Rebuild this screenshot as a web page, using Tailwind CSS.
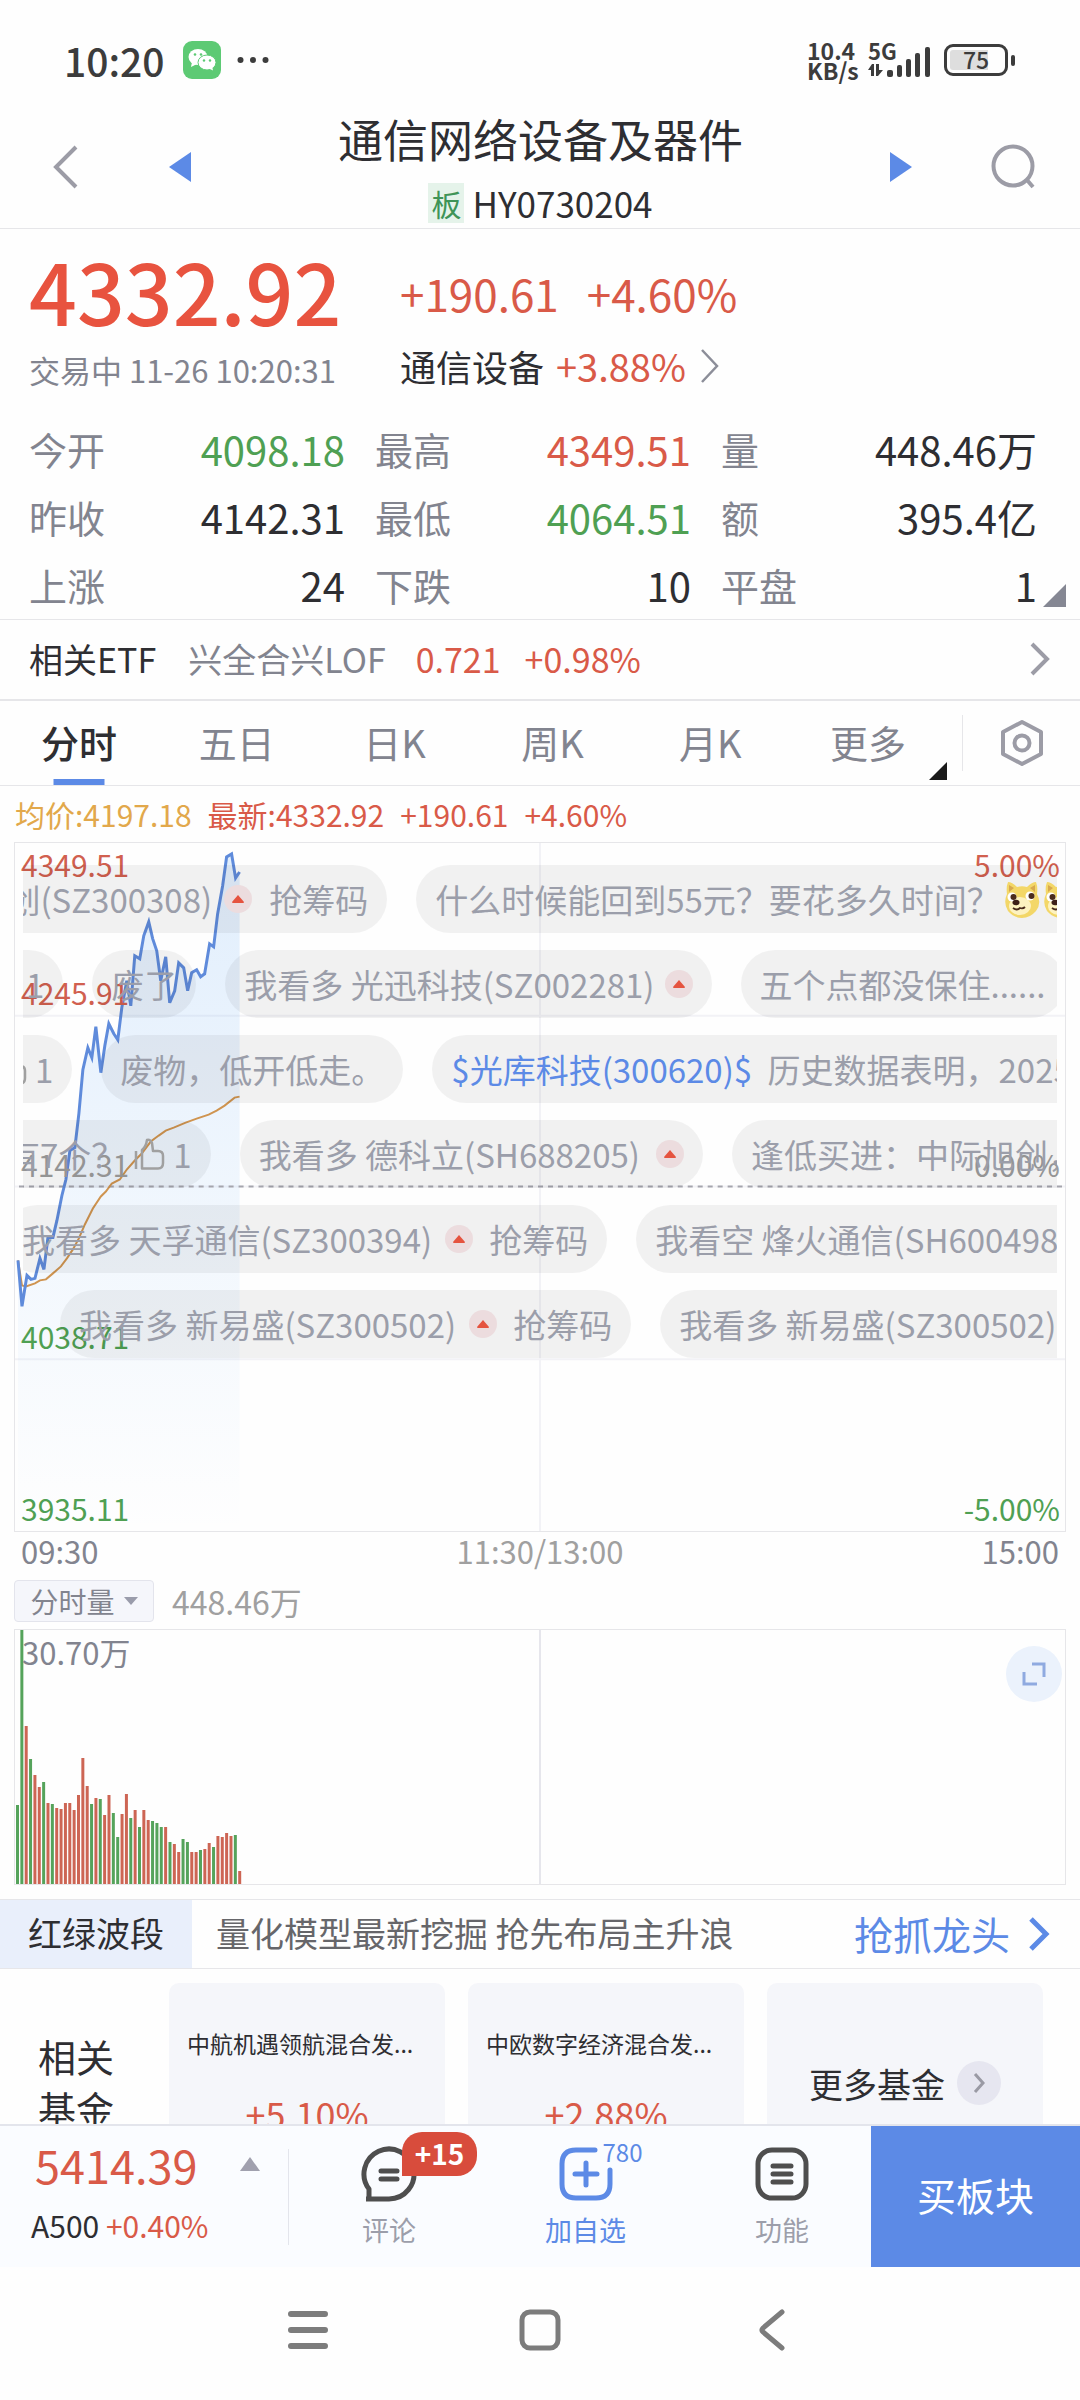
<!DOCTYPE html>
<html lang="zh-CN">
<head>
  <meta charset="UTF-8" />
  <meta name="viewport" content="width=device-width, initial-scale=1.0"/>
  <title>通信网络设备及器件 HY0730204</title>
  <script src="https://cdn.jsdelivr.net/npm/@tailwindcss/browser@4"></script>
</head>
<body class="h-screen flex flex-col overflow-hidden bg-[#fefefe] text-[#2e2e32] font-['Noto_Sans_CJK_SC',sans-serif] whitespace-nowrap">

  <!-- Shared icons -->
  <svg class="hidden">
    <symbol id="up" viewBox="0 0 28 28">
      <circle cx="14" cy="14" r="14" fill="#ecdcde"/>
      <path d="M14 10 L20 17 Q20 18 19 18 H9 Q8 18 8 17 Z" fill="#e5533f"/>
    </symbol>
    <symbol id="thumb" viewBox="0 0 31 32">
      <path d="M2 13 V31 M8 30.500 H24 Q29 30.500 29 25 V18 Q29 13 24 13 H19 L18 5 Q16 1 13 2 Q12 9 8 12 Z" fill="none" stroke="#a0a0a0" stroke-width="2.500" stroke-linejoin="round"/>
    </symbol>
    <symbol id="doge" viewBox="0 0 36 40">
      <path d="M4 3 Q8 3 13 8 Q18 6.500 23 8 Q28 3 32 3 Q34 8 33 15 Q38 24 32 32 Q26 39 18 39 Q10 39 4 32 Q-1 24 3 15 Q2 8 4 3Z" fill="#f3d768"/>
      <path d="M5 6 L10 9 L5 13Z M31 6 L26 9 L31 13Z" fill="#d8a94e"/>
      <ellipse cx="16" cy="27" rx="11" ry="9" fill="#fdf2c0"/>
      <circle cx="8" cy="18" r="4.500" fill="#fff"/><circle cx="26" cy="17" r="4.500" fill="#fff"/>
      <circle cx="9.500" cy="18" r="3" fill="#4a2b1c"/><circle cx="27.500" cy="17" r="3" fill="#4a2b1c"/>
      <ellipse cx="12" cy="23.500" rx="3.500" ry="2.800" fill="#3d2018"/>
      <path d="M9 29 Q13 32 16 29 Q19 30 21 28" fill="none" stroke="#4a2b1c" stroke-width="1.800"/>
    </symbol>
  </svg>

  <!-- Status bar -->
  <div class="h-[106px] pt-[14px] shrink-0 flex items-center pl-[64px] pr-[72px]">
    <span class="text-[39px] leading-[48px] font-medium text-[#3c3c3c]">10:20</span>
    <svg class="ml-[18px] size-[38px]" viewBox="0 0 38 38">
      <rect width="38" height="38" rx="9" fill="#5dca74"/>
      <ellipse cx="15" cy="16" rx="9.500" ry="8" fill="#fff"/>
      <path d="M9 21 L8 26 L14 23Z" fill="#fff"/>
      <ellipse cx="24" cy="21.500" rx="9" ry="7.500" fill="#fff" stroke="#5dca74" stroke-width="1"/>
      <path d="M25 27 L30 29.500 L29 25Z" fill="#fff"/>
      <g fill="#5dca74"><circle cx="12" cy="13.500" r="1.300"/><circle cx="18" cy="13.500" r="1.300"/><circle cx="21" cy="19.500" r="1.200"/><circle cx="27" cy="19.500" r="1.200"/></g>
    </svg>
    <svg class="ml-[16px] w-[32px] h-[8px]" viewBox="0 0 32 8" fill="#3c3c3c"><circle cx="3.500" cy="4" r="3"/><circle cx="16" cy="4" r="3"/><circle cx="28.500" cy="4" r="3"/></svg>
    <div class="ml-auto w-[53px] text-[23px] leading-[20px] font-bold text-[#3c3c3c]">
      <p>10.4</p>
      <p>KB/s</p>
    </div>
    <div class="ml-[8px] relative w-[66px] h-[40px]">
      <span class="absolute left-0 top-0 text-[22px] leading-[20px] font-bold text-[#3c3c3c]">5G</span>
      <svg class="absolute bottom-[3px] left-0 w-[66px] h-[30px]" viewBox="0 0 66 30" fill="#3c3c3c">
        <path d="M4 17 L0 23 H3 V29 H6 V17Z M8 17 V29 H10 L15 23 H11 V17Z"/>
        <rect x="19" y="23" width="6" height="7" rx="2"/><rect x="29" y="18" width="5" height="12" rx="2"/><rect x="38" y="12" width="5" height="18" rx="2"/><rect x="47" y="6" width="5" height="24" rx="2"/><rect x="57" y="0" width="5" height="30" rx="2"/>
      </svg>
    </div>
    <div class="ml-[10px] relative w-[64px] h-[32px] rounded-[9px] border-[3px] border-[#3c3c3c] p-[3px]">
      <div class="w-[38px] h-full bg-[#dedede] rounded-l-[3px]"></div>
      <span class="absolute inset-0 text-center text-[23px] leading-[24px] font-medium text-[#3c3c3c]">75</span>
      <div class="absolute -right-[10px] top-[8px] w-[4px] h-[11px] rounded-full bg-[#3c3c3c]"></div>
    </div>
  </div>

  <!-- Title -->
  <header class="h-[123px] shrink-0 border-b border-[#e6e6e9] flex items-center pl-[52px] pr-[44px]">
    <button aria-label="返回"><svg class="w-[28px] h-[44px]" viewBox="0 0 28 44"><path d="M24 2 L4 22 L24 42" fill="none" stroke="#9c9ca6" stroke-width="4"/></svg></button>
    <button aria-label="上一个" class="ml-[89px]"><svg class="w-[22px] h-[30px]" viewBox="0 0 22 30"><path d="M22 0 V30 L0 15Z" fill="#5c8ae6"/></svg></button>
    <div class="flex-1 flex flex-col items-center gap-[14px] pb-[2px]">
      <h1 class="text-[45px] leading-[60px]">通信网络设备及器件</h1>
      <div class="flex items-center gap-[8px] text-[35px] leading-[40px]">
        <span class="bg-[#e5f3ea] text-[#3f9457] text-[30px] px-[3px]">板</span>
        <span>HY0730204</span>
      </div>
    </div>
    <button aria-label="下一个" class="mr-[78px]"><svg class="w-[22px] h-[30px]" viewBox="0 0 22 30"><path d="M0 0 V30 L22 15Z" fill="#5c8ae6"/></svg></button>
    <button aria-label="搜索"><svg class="w-[46px] h-[46px]" viewBox="0 0 46 46" fill="none" stroke="#9c9ca6" stroke-width="4"><circle cx="23" cy="22" r="19.500"/><path d="M37 36 L43 43"/></svg></button>
  </header>

  <!-- Scrolling content -->
  <main class="flex-1 min-h-0 overflow-hidden">

    <section class="border-b border-[#e6e6e9] relative">
      <div class="flex pl-[29px] pr-[30px] pt-[13px] pb-[24px]">
        <div class="w-[371px]">
          <p class="text-[84px] leading-[96px] font-medium text-[#e8533f]">4332.92</p>
          <p class="mt-[12px] text-[31px] leading-[40px] text-[#82848f]">交易中 11-26 10:20:31</p>
        </div>
        <div class="pt-[23px]">
          <p class="flex gap-[28px] text-[44px] leading-[56px] text-[#d95a48]"><span>+190.61</span><span>+4.60%</span></p>
          <a href="#" class="mt-[20px] flex items-center text-[36px] leading-[50px]">通信设备<span class="ml-[12px] text-[38px] text-[#d95a48]">+3.88%</span>
            <svg class="ml-[14px] w-[20px] h-[36px]" viewBox="0 0 20 36"><path d="M2 2 L17 18 L2 34" fill="none" stroke="#8c8e99" stroke-width="2.500"/></svg>
          </a>
        </div>
      </div>
      <dl class="grid grid-cols-3 gap-x-[30px] pl-[29px] pr-[43px] text-[38px] leading-[68px]">
        <div class="flex justify-between"><dt class="text-[#82848f]">今开</dt><dd class="text-[40px] text-[#4fa053]">4098.18</dd></div>
        <div class="flex justify-between"><dt class="text-[#82848f]">最高</dt><dd class="text-[40px] text-[#d95a48]">4349.51</dd></div>
        <div class="flex justify-between"><dt class="text-[#82848f]">量</dt><dd class="text-[40px]">448.46万</dd></div>
        <div class="flex justify-between"><dt class="text-[#82848f]">昨收</dt><dd class="text-[40px]">4142.31</dd></div>
        <div class="flex justify-between"><dt class="text-[#82848f]">最低</dt><dd class="text-[40px] text-[#4fa053]">4064.51</dd></div>
        <div class="flex justify-between"><dt class="text-[#82848f]">额</dt><dd class="text-[40px]">395.4亿</dd></div>
        <div class="flex justify-between"><dt class="text-[#82848f]">上涨</dt><dd class="text-[40px]">24</dd></div>
        <div class="flex justify-between"><dt class="text-[#82848f]">下跌</dt><dd class="text-[40px]">10</dd></div>
        <div class="flex justify-between"><dt class="text-[#82848f]">平盘</dt><dd class="text-[40px]">1</dd></div>
      </dl>
      <svg class="absolute right-[14px] bottom-[12px] w-[23px] h-[23px]" viewBox="0 0 23 23"><path d="M23 0 V23 H0Z" fill="#858793"/></svg>
    </section>

    <!-- Related ETF -->
    <a href="#" class="h-[81px] border-b-2 border-[#e6e6e9] flex items-center pl-[29px] pr-[30px] pb-[2px] text-[34px]">
      <span>相关ETF</span>
      <span class="ml-[32px] text-[#82848f]">兴全合兴LOF</span>
      <span class="ml-[30px] text-[#d95a48]">0.721</span>
      <span class="ml-[24px] text-[#d95a48]">+0.98%</span>
      <svg class="ml-auto w-[20px] h-[34px]" viewBox="0 0 20 34"><path d="M2 2 L17 17 L2 32" fill="none" stroke="#9c9ca6" stroke-width="4"/></svg>
    </a>

    <!-- Period tabs -->
    <nav class="h-[85px] border-b border-[#e6e6e9] flex items-center text-[38px] text-[#82848f]">
      <div class="flex-1 h-full grid grid-cols-6 relative">
        <button class="relative pb-[4px] font-medium text-[#2e2e32]">分时<span class="absolute bottom-0 left-1/2 -translate-x-1/2 w-[51px] h-[6px] bg-[#5c8ae6]"></span></button>
        <button class="pb-[4px]">五日</button>
        <button class="pb-[4px]">日K</button>
        <button class="pb-[4px]">周K</button>
        <button class="pb-[4px]">月K</button>
        <button class="pb-[4px]">更多</button>
        <svg class="absolute right-0 bottom-[5px] w-[18px] h-[18px]" viewBox="0 0 18 18"><path d="M18 0 V18 H0Z" fill="#1a1a1a"/></svg>
      </div>
      <button aria-label="设置" class="ml-[15px] w-[118px] h-[56px] border-l border-[#e6e6e9] flex items-center justify-center">
        <svg class="w-[44px] h-[48px]" viewBox="0 0 44 48" fill="none" stroke="#9c9ca6" stroke-width="4"><path d="M22 3 L41 13 V35 L22 45 L3 35 V13Z" stroke-linejoin="round"/><circle cx="22" cy="24" r="7.500"/></svg>
      </button>
    </nav>

    <div class="h-[56px] flex items-center gap-[16px] px-[15px] text-[30px] text-[#d95a48]">
      <span class="text-[#e2a84b]">均价:4197.18</span>
      <span>最新:4332.92</span>
      <span>+190.61</span>
      <span>+4.60%</span>
    </div>

    <!-- Price chart -->
    <div class="mx-[14px] h-[690px] relative border border-[#e6e6e9] text-[30px] leading-[36px]">
      <svg class="absolute inset-0 w-full h-full" viewBox="0 0 1052 689" preserveAspectRatio="none">
        <defs>
          <linearGradient id="fade" x1="0" y1="0" x2="0" y2="1">
            <stop offset="0" stop-color="#4a9cf5" stop-opacity=".16"/>
            <stop offset="1" stop-color="#4a9cf5" stop-opacity="0"/>
          </linearGradient>
        </defs>
        <path d="M0 173H1052M0 344H1052M0 517H1052M526 0V689" stroke="#f2f2f6" stroke-width="2"/>
        <path d="M3 689V418L7 464 12 433 16 437 20 436 25 416 29 427 33 395 38 395 42 378 47 353 51 337 55 308 60 305 64 271 68 227 73 205 77 215 81 184 86 230 90 203 94 181 99 191 103 197 107 165 112 138 116 163 120 113 125 116 129 93 134 79 138 96 142 108 146 138 151 114 155 160 160 148 164 120 169 125 173 148 177 130 182 127 186 134 190 131 195 101 199 104 203 71 208 43 212 14 217 11 221 35 225 29V689Z" fill="url(#fade)"/>
        <path d="M4 344H1052" stroke="#a5a5ad" stroke-width="2" stroke-dasharray="5 5"/>
        <polyline points="3,418 7,443 11,444 20,441 25,438 31,437 38,431 46,424 52,416 58,407 64,396 70,382 78,366 86,354 91,349 97,341 105,337 112,327 120,318 127,311 136,299 144,293 151,288 159,285 171,280 182,276 194,272 202,268 210,263 220,255 225,254" fill="none" stroke="#cf9450" stroke-width="2"/>
        <polyline points="3,418 7,464 12,433 16,437 20,436 25,416 29,427 33,395 38,395 42,378 47,353 51,337 55,308 60,305 64,271 68,227 73,205 77,215 81,184 86,230 90,203 94,181 99,191 103,197 107,165 112,138 116,163 120,113 125,116 129,93 134,79 138,96 142,108 146,138 151,114 155,160 160,148 164,120 169,125 173,148 177,130 182,127 186,134 190,131 195,101 199,104 203,71 208,43 212,14 217,11 221,35 225,29" fill="none" stroke="#5f8bdb" stroke-width="3"/>
      </svg>

      <!-- Axis labels, one cell per grid band -->
      <div class="absolute inset-0 grid grid-rows-4 pl-[6px] pr-[5px]">
        <div class="flex justify-between pt-[3px] pb-[5px]">
          <div class="flex flex-col justify-between text-[#d1604f]"><span>4349.51</span><span>4245.91</span></div>
          <span class="text-[#d1604f]">5.00%</span>
        </div>
        <div class="flex justify-between items-end pb-[5px] text-[#9c9c9c]"><span>4142.31</span><span>0.00%</span></div>
        <div class="flex items-end pb-[5px] text-[#4fa053]">4038.71</div>
        <div class="flex justify-between items-end pb-[5px] text-[#4fa053]"><span>3935.11</span><span>-5.00%</span></div>
      </div>

      <!-- Comment marquee -->
      <div class="absolute inset-x-[8px] top-[22px] flex flex-col gap-[17px] overflow-hidden text-[33px] leading-[68px] text-[#9b9eaa]">
        <div class="flex gap-[29px] -ml-[240px]">
          <p class="shrink-0 flex items-center rounded-full bg-black/5 px-[19px]">我看多 中际旭创(SZ300308)<svg class="ml-[12px] mr-[17px] size-[28px]"><use href="#up"/></svg>抢筹码</p>
          <p class="shrink-0 flex items-center rounded-full bg-black/5 px-[19px]">什么时候能回到55元？要花多久时间？<svg class="ml-[4px] w-[36px] h-[40px]"><use href="#doge"/></svg><svg class="ml-[3px] w-[36px] h-[40px]"><use href="#doge"/></svg></p>
        </div>
        <div class="flex gap-[29px] -ml-[57px]">
          <p class="shrink-0 flex items-center rounded-full bg-black/5 px-[19px]"><svg class="mr-[10px] w-[31px] h-[32px]"><use href="#thumb"/></svg>1</p>
          <p class="shrink-0 rounded-full bg-black/5 px-[19px]">废了</p>
          <p class="shrink-0 flex items-center rounded-full bg-black/5 px-[19px]">我看多 光迅科技(SZ002281)<svg class="ml-[10px] size-[28px]"><use href="#up"/></svg></p>
          <p class="shrink-0 rounded-full bg-black/5 px-[19px]">五个点都没保住......</p>
        </div>
        <div class="flex gap-[29px] -ml-[46px]">
          <p class="shrink-0 flex items-center rounded-full bg-black/5 px-[19px]"><svg class="mr-[8px] w-[31px] h-[32px]"><use href="#thumb"/></svg>1</p>
          <p class="shrink-0 rounded-full bg-black/5 px-[19px]">废物，低开低走。</p>
          <p class="shrink-0 rounded-full bg-black/5 px-[19px]"><a href="#" class="mr-[8px] text-[#5c8ae6]">$光库科技(300620)$</a> 历史数据表明，2025年</p>
        </div>
        <div class="flex gap-[29px] -ml-[35px]">
          <p class="shrink-0 flex items-center rounded-full bg-black/5 px-[19px]">有7个？<svg class="ml-[10px] mr-[8px] w-[31px] h-[32px]"><use href="#thumb"/></svg>1</p>
          <p class="shrink-0 flex items-center rounded-full bg-black/5 px-[19px]">我看多 德科立(SH688205)<svg class="ml-[16px] size-[28px]"><use href="#up"/></svg></p>
          <p class="shrink-0 rounded-full bg-black/5 px-[19px]">逢低买进：中际旭创，新易盛</p>
        </div>
        <div class="flex gap-[29px] -ml-[20px]">
          <p class="shrink-0 flex items-center rounded-full bg-black/5 px-[19px]">我看多 天孚通信(SZ300394)<svg class="ml-[13px] mr-[16px] size-[28px]"><use href="#up"/></svg>抢筹码</p>
          <p class="shrink-0 flex items-center rounded-full bg-black/5 px-[19px]">我看空 烽火通信(SH600498)<svg class="ml-[13px] size-[28px]"><use href="#up"/></svg></p>
        </div>
        <div class="flex gap-[29px] ml-[37px]">
          <p class="shrink-0 flex items-center rounded-full bg-black/5 px-[19px]">我看多 新易盛(SZ300502)<svg class="ml-[13px] mr-[16px] size-[28px]"><use href="#up"/></svg>抢筹码</p>
          <p class="shrink-0 flex items-center rounded-full bg-black/5 px-[19px]">我看多 新易盛(SZ300502)<svg class="ml-[13px] size-[28px]"><use href="#up"/></svg></p>
        </div>
      </div>
    </div>

    <div class="mx-[21px] grid grid-cols-3 text-[31px] leading-[38px] text-[#82848f]">
      <span>09:30</span>
      <span class="text-center text-[#a0a0a0]">11:30/13:00</span>
      <span class="text-right">15:00</span>
    </div>

    <!-- Volume -->
    <div class="mt-[10px] mx-[14px] flex items-center gap-[18px]">
      <button class="h-[42px] w-[140px] flex items-center justify-center gap-[9px] rounded-[4px] border border-[#e3e4ec] bg-[#f5f6fb] text-[28px] leading-[38px] text-[#82848f]">分时量
        <svg class="w-[14px] h-[8px]" viewBox="0 0 14 8"><path d="M0 0H14L7 8Z" fill="#9a9cab"/></svg>
      </button>
      <span class="text-[32px] leading-[38px] text-[#a0a0a0]">448.46万</span>
    </div>
    <div class="mt-[7px] mx-[14px] h-[256px] relative border border-[#e6e6e9]">
      <svg id="volume" class="absolute inset-0 w-full h-full" viewBox="0 0 1052 254" preserveAspectRatio="none">
        <path d="M526 0V254" stroke="#e6e6ec" stroke-width="2"/>
      </svg>
      <span class="absolute left-[7px] top-[3px] text-[31px] leading-[38px] text-[#82848f]">30.70万</span>
      <button aria-label="展开" class="absolute right-[3px] top-[16px] size-[56px] rounded-full bg-[#ebf2fc] flex items-center justify-center">
        <svg class="size-[24px]" viewBox="0 0 24 24" fill="none" stroke="#8faae0" stroke-width="3"><path d="M10 2 H22 V15 M2 10 V22 H15"/></svg>
      </button>
    </div>

    <!-- Promo -->
    <a href="#" class="mt-[14px] h-[70px] border-y border-[#e6e6e9] flex items-center pr-[30px] text-[34px] leading-[66px]">
      <span class="h-full w-[192px] bg-[#e9effb] text-center">红绿波段</span>
      <span class="h-full ml-[24px] text-[#66666a]">量化模型最新挖掘 抢先布局主升浪</span>
      <span class="h-full ml-auto text-[39px] text-[#5c8ae6]">抢抓龙头</span>
      <svg class="ml-[18px] w-[22px] h-[36px]" viewBox="0 0 22 36"><path d="M3 3 L18 18 L3 33" fill="none" stroke="#5c8ae6" stroke-width="5"/></svg>
    </a>

    <!-- Funds -->
    <section class="pt-[14px] pr-[37px] flex">
      <h2 class="w-[169px] pl-[38px] pt-[47px] text-[38px] leading-[52px]">相关<br>基金</h2>
      <div class="flex-1 grid grid-cols-3 gap-[23px]">
        <a href="#" class="h-[200px] rounded-[10px] bg-[#f5f6fa] pt-[42px] px-[18px] text-center">
          <p class="text-left text-[23px] leading-[36px]">中航机遇领航混合发...</p>
          <p class="mt-[28px] text-[36px] leading-[48px] text-[#d95a48]">+5.10%</p>
        </a>
        <a href="#" class="h-[200px] rounded-[10px] bg-[#f5f6fa] pt-[42px] px-[18px] text-center">
          <p class="text-left text-[23px] leading-[36px]">中欧数字经济混合发...</p>
          <p class="mt-[28px] text-[36px] leading-[48px] text-[#d95a48]">+2.88%</p>
        </a>
        <a href="#" class="h-[200px] rounded-[10px] bg-[#f5f6fa] flex items-center justify-center gap-[12px] text-[34px]">更多基金
          <span class="size-[44px] rounded-full bg-[#e6e6f0] flex items-center justify-center"><svg class="w-[12px] h-[20px]" viewBox="0 0 12 20"><path d="M2 1 L10 10 L2 19" fill="none" stroke="#9a9aa4" stroke-width="3"/></svg></span>
        </a>
      </div>
    </section>
  </main>

  <!-- Action bar -->
  <footer class="h-[143px] shrink-0 border-t-2 border-[#e3e5ec] bg-[#fafcff] flex items-center">
    <a href="#" class="w-[289px] h-[96px] border-r border-[#e3e5ec] flex justify-between pl-[31px] pr-[28px]">
      <div>
        <p class="pl-[4px] text-[45px] leading-[44px] text-[#d95a48] -mt-[6px]">5414.39</p>
        <p class="mt-[20px] text-[30px] leading-[36px]">A500 <span class="text-[#d95a48]">+0.40%</span></p>
      </div>
      <svg class="mt-[8px] w-[20px] h-[14px]" viewBox="0 0 20 14"><path d="M10 0 L20 14 H0Z" fill="#a0a0ae"/></svg>
    </a>
    <div class="flex-1 flex justify-between pl-[40px] pr-[29px] text-[27px] leading-[36px] text-[#9c9eaa]">
      <button class="relative w-[120px] flex flex-col items-center gap-[10px]">
        <svg class="size-[56px]" viewBox="0 0 56 56" fill="none" stroke="#4e4e4e" stroke-width="5"><path d="M5 53 H28 A25 25 0 1 0 8 43 V53" stroke-linejoin="round"/><path d="M20 25 H36 M20 33 H36" stroke-linecap="round"/></svg>
        评论
        <span class="absolute left-[73px] -top-[14px] w-[75px] h-[44px] rounded-[20px] rounded-bl-none bg-[#d84c3c] text-white text-[28px] leading-[42px] font-bold">+15</span>
      </button>
      <button class="relative w-[120px] flex flex-col items-center gap-[10px] text-[#5c8ae6]">
        <svg class="size-[56px]" viewBox="0 0 56 56" fill="none" stroke="#5c8ae6" stroke-width="5" stroke-linecap="round"><path d="M37 4 H18 Q4 4 4 18 V38 Q4 52 18 52 H38 Q52 52 52 38 V24 M28 17 V39 M17 28 H39"/></svg>
        加自选
        <span class="absolute left-[77px] -top-[8px] text-[24px] leading-[28px]">780</span>
      </button>
      <button class="w-[120px] flex flex-col items-center gap-[10px]">
        <svg class="size-[56px]" viewBox="0 0 56 56" fill="none" stroke="#4e4e4e" stroke-width="5" stroke-linecap="round"><rect x="4" y="4" width="48" height="48" rx="14"/><path d="M19 20 H37 M19 28 H37 M19 36 H37"/></svg>
        功能
      </button>
    </div>
    <button class="self-stretch w-[209px] pb-[4px] bg-[#5c8ae6] text-white text-[39px]">买板块</button>
  </footer>

  <!-- System navigation -->
  <div class="h-[133px] pb-[8px] shrink-0 flex items-center justify-center gap-[188px]">
    <button aria-label="最近任务"><svg class="size-[44px]" viewBox="0 0 44 44" stroke="#7c7c7c" stroke-width="6" stroke-linecap="round"><path d="M5 6 H39 M5 22 H39 M5 38 H39"/></svg></button>
    <button aria-label="主屏幕"><svg class="size-[44px]" viewBox="0 0 44 44" fill="none" stroke="#7c7c7c" stroke-width="5"><rect x="4" y="4" width="36" height="36" rx="8"/></svg></button>
    <button aria-label="后退"><svg class="size-[44px]" viewBox="0 0 44 44" fill="none" stroke="#7c7c7c" stroke-width="5" stroke-linecap="round"><path d="M32 4 L13 20 Q11 22 13 24 L32 40"/></svg></button>
  </div>

  <script>
    // one [height, direction] pair per trading minute
    const bars = [
      [79,"g"],[254,"g"],[158,"r"],[125,"g"],[109,"r"],[97,"r"],[102,"g"],[81,"r"],[80,"g"],[76,"r"],[75,"r"],[81,"r"],[81,"r"],
      [74,"r"],[89,"r"],[126,"r"],[98,"r"],[80,"g"],[86,"r"],[85,"g"],[69,"r"],[89,"r"],[71,"g"],[47,"g"],[70,"r"],[90,"r"],
      [66,"g"],[74,"r"],[57,"g"],[74,"r"],[64,"r"],[63,"g"],[61,"g"],[57,"g"],[57,"r"],[42,"g"],[40,"r"],[32,"r"],[45,"g"],
      [42,"g"],[32,"r"],[32,"r"],[34,"g"],[35,"r"],[41,"r"],[37,"g"],[48,"r"],[47,"r"],[51,"r"],[48,"r"],[49,"g"],[13,"r"]
    ];
    const volume = document.getElementById("volume");
    bars.forEach(([h, dir], i) => {
      const rect = document.createElementNS("http://www.w3.org/2000/svg", "rect");
      rect.setAttribute("x", 1 + i * 1052 / 241);
      rect.setAttribute("y", 254 - h);
      rect.setAttribute("width", 3);
      rect.setAttribute("height", h);
      rect.setAttribute("fill", dir === "g" ? "#55a35b" : "#cd6554");
      volume.appendChild(rect);
    });
  </script>
</body>
</html>
